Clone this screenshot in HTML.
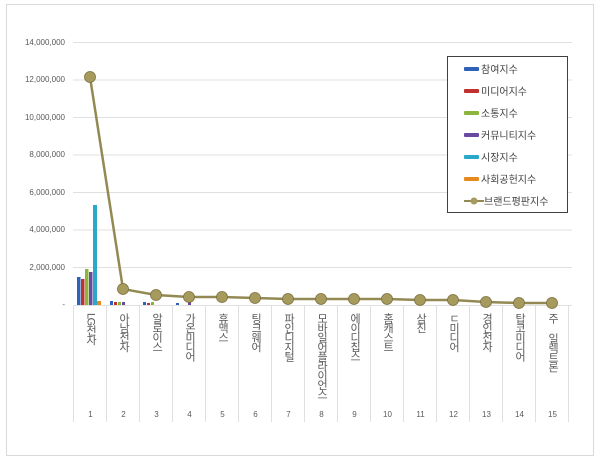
<!DOCTYPE html>
<html><head><meta charset="utf-8"><style>
body{margin:0;width:600px;height:463px;background:#fff;overflow:hidden;font-family:"Liberation Sans","Noto Sans CJK KR",sans-serif}
.frame{position:absolute;left:6px;top:4px;width:588px;height:452px;border:1px solid #d9d9d9;box-sizing:border-box}
.yl{position:absolute;right:535px;font-size:8px;color:#595959;text-align:right;width:60px}
.cat{position:absolute;top:313px;width:33px;text-align:center;font-size:11px;color:#595959}
.cat .t{writing-mode:vertical-lr;text-orientation:upright;margin:0 auto;letter-spacing:-1.5px;line-height:12px}
.cat .t .m{text-orientation:mixed}
.num{position:absolute;top:410px;width:33px;text-align:center;font-size:8px;color:#595959}
.leg{position:absolute;left:447px;top:56px;width:121px;height:157px;border:1px solid #404040;box-sizing:border-box;background:#fff}
.li{position:absolute;left:16px;font-size:10px;color:#404040;display:flex;align-items:center}
.sw{width:15px;height:4px;margin-right:2px;border-radius:1px}
</style></head><body>
<div class="frame"></div>
<div class="yl" style="top:38px">14,000,000</div>
<div class="yl" style="top:75px">12,000,000</div>
<div class="yl" style="top:113px">10,000,000</div>
<div class="yl" style="top:150px">8,000,000</div>
<div class="yl" style="top:188px">6,000,000</div>
<div class="yl" style="top:225px">4,000,000</div>
<div class="yl" style="top:263px">2,000,000</div>
<div class="yl" style="top:300px">-</div>
<svg width="600" height="463" style="position:absolute;left:0;top:0">
<g stroke="#e0e0e0" stroke-width="1">
<line x1="73" x2="572" y1="42.5" y2="42.5"/><line x1="73" x2="572" y1="80" y2="80"/><line x1="73" x2="572" y1="117.5" y2="117.5"/><line x1="73" x2="572" y1="155" y2="155"/><line x1="73" x2="572" y1="192.5" y2="192.5"/><line x1="73" x2="572" y1="230" y2="230"/><line x1="73" x2="572" y1="267.5" y2="267.5"/><line x1="73" x2="572" y1="305.5" y2="305.5"/>
<line x1="73.5" x2="73.5" y1="305" y2="422"/><line x1="106.5" x2="106.5" y1="305" y2="422"/><line x1="139.5" x2="139.5" y1="305" y2="422"/><line x1="172.5" x2="172.5" y1="305" y2="422"/><line x1="205.5" x2="205.5" y1="305" y2="422"/><line x1="238.5" x2="238.5" y1="305" y2="422"/><line x1="271.5" x2="271.5" y1="305" y2="422"/><line x1="304.5" x2="304.5" y1="305" y2="422"/><line x1="337.5" x2="337.5" y1="305" y2="422"/><line x1="370.5" x2="370.5" y1="305" y2="422"/><line x1="403.5" x2="403.5" y1="305" y2="422"/><line x1="436.5" x2="436.5" y1="305" y2="422"/><line x1="469.5" x2="469.5" y1="305" y2="422"/><line x1="502.5" x2="502.5" y1="305" y2="422"/><line x1="535.5" x2="535.5" y1="305" y2="422"/><line x1="568.5" x2="568.5" y1="305" y2="422"/>
</g>
<rect x="77" y="277" width="3.5" height="28" fill="#2e62b8"/>
<rect x="81" y="279" width="3.5" height="26" fill="#c0302c"/>
<rect x="85" y="269" width="3.5" height="36" fill="#8cb53c"/>
<rect x="89" y="272" width="3.5" height="33" fill="#6a4aa0"/>
<rect x="93" y="205" width="4" height="100" fill="#2aa8c8"/>
<rect x="97" y="301" width="4" height="4" fill="#e68a1e"/>
<g fill="#2e62b8"><rect x="110" y="301" width="3" height="4"/><rect x="143" y="302" width="3" height="3"/><rect x="176" y="303" width="3" height="2"/></g>
<g fill="#c0302c"><rect x="114" y="302" width="3" height="3"/><rect x="147" y="303" width="3" height="2"/></g>
<g fill="#8cb53c"><rect x="118" y="302" width="3" height="3"/><rect x="151" y="302" width="3" height="3"/></g>
<g fill="#6a4aa0"><rect x="122" y="302" width="3" height="3"/><rect x="188" y="301" width="3" height="4"/></g>
<polyline fill="none" stroke="#938953" stroke-width="2.5" points="90,77 123,289 156,295 189,297 222,297 255,298 288,299 321,299 354,299 387,299 420,300 453,300 486,302 519,303 552,303"/>
<g fill="#a69a5c" stroke="#7a7040" stroke-width="0.8">
<circle cx="90" cy="77" r="5.5"/><circle cx="123" cy="289" r="5.5"/><circle cx="156" cy="295" r="5.5"/><circle cx="189" cy="297" r="5.5"/><circle cx="222" cy="297" r="5.5"/><circle cx="255" cy="298" r="5.5"/><circle cx="288" cy="299" r="5.5"/><circle cx="321" cy="299" r="5.5"/><circle cx="354" cy="299" r="5.5"/><circle cx="387" cy="299" r="5.5"/><circle cx="420" cy="300" r="5.5"/><circle cx="453" cy="300" r="5.5"/><circle cx="486" cy="302" r="5.5"/><circle cx="519" cy="303" r="5.5"/><circle cx="552" cy="303" r="5.5"/>
</g>
</svg>
<div class="cat" style="left:74px"><div class="t"><span class="m">LG</span>전자</div></div>
<div class="cat" style="left:107px"><div class="t">아남전자</div></div>
<div class="cat" style="left:140px"><div class="t">알로이스</div></div>
<div class="cat" style="left:173px"><div class="t">가온미디어</div></div>
<div class="cat" style="left:206px"><div class="t">휴맥스</div></div>
<div class="cat" style="left:239px"><div class="t">팅크웨어</div></div>
<div class="cat" style="left:272px"><div class="t">파인디지털</div></div>
<div class="cat" style="left:305px"><div class="t">모바일어플라이언스</div></div>
<div class="cat" style="left:338px"><div class="t">에이디칩스</div></div>
<div class="cat" style="left:371px"><div class="t">홈캐스트</div></div>
<div class="cat" style="left:404px"><div class="t">삼진</div></div>
<div class="cat" style="left:437px"><div class="t">ㄷ미디어</div></div>
<div class="cat" style="left:470px"><div class="t">경인전자</div></div>
<div class="cat" style="left:503px"><div class="t">탑코미디어</div></div>
<div class="cat" style="left:536px"><div class="t">주 일렉트론</div></div>
<div class="num" style="left:74px">1</div><div class="num" style="left:107px">2</div><div class="num" style="left:140px">3</div><div class="num" style="left:173px">4</div><div class="num" style="left:206px">5</div><div class="num" style="left:239px">6</div><div class="num" style="left:272px">7</div><div class="num" style="left:305px">8</div><div class="num" style="left:338px">9</div><div class="num" style="left:371px">10</div><div class="num" style="left:404px">11</div><div class="num" style="left:437px">12</div><div class="num" style="left:470px">13</div><div class="num" style="left:503px">14</div><div class="num" style="left:536px">15</div>
<div class="leg">
<div class="li" style="top:4px"><span class="sw" style="background:#2e62b8"></span>참여지수</div>
<div class="li" style="top:26px"><span class="sw" style="background:#c0302c"></span>미디어지수</div>
<div class="li" style="top:48px"><span class="sw" style="background:#8cb53c"></span>소통지수</div>
<div class="li" style="top:70px"><span class="sw" style="background:#6a4aa0"></span>커뮤니티지수</div>
<div class="li" style="top:92px"><span class="sw" style="background:#2aa8c8"></span>시장지수</div>
<div class="li" style="top:114px"><span class="sw" style="background:#e68a1e"></span>사회공헌지수</div>
<div class="li" style="top:136px"><svg width="20" height="10"><line x1="0" y1="5" x2="20" y2="5" stroke="#938953" stroke-width="2"/><circle cx="10" cy="5" r="3.5" fill="#a69a5c"/></svg>브랜드평판지수</div>
</div>
</body></html>
